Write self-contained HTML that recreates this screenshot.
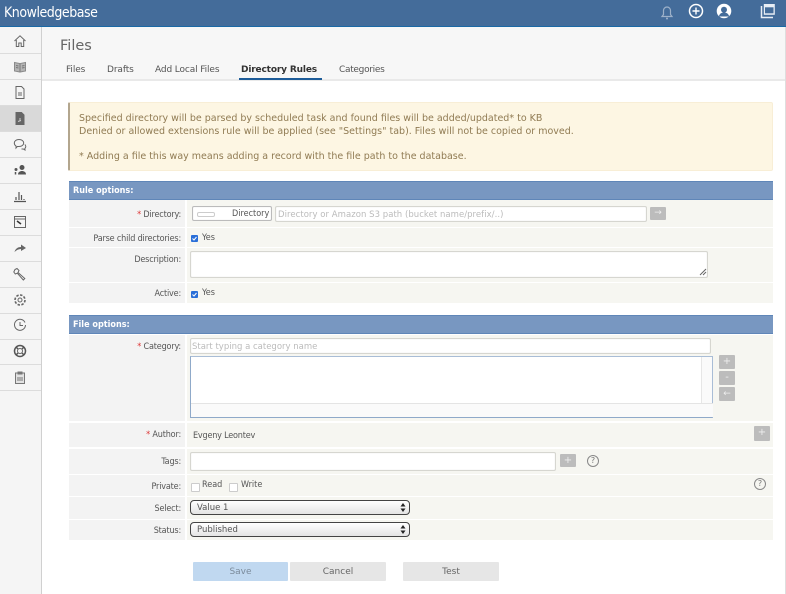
<!DOCTYPE html>
<html><head><meta charset="utf-8">
<style>
html,body{margin:0;padding:0;background:#fff;}
#p{position:relative;width:786px;height:594px;overflow:hidden;background:#fff;font-family:"DejaVu Sans","Liberation Sans",sans-serif;font-size:9px;color:#555;}
#p div,#p span.a,#p svg{position:absolute;}
.t{position:absolute;white-space:nowrap;line-height:12px;}
.c{font-stretch:condensed;}
.r{position:absolute;white-space:nowrap;line-height:12px;text-align:right;left:69px;width:112px;color:#555;font-stretch:condensed;letter-spacing:-.18px;}
.l{left:69px;width:116px;background:#f3f3f3;}
.v{left:187px;width:586px;background:#f6f6f1;}
.sep{left:0;width:41px;height:1px;background:#dcdcdc;}
.inp{background:#fff;border:1px solid #d6d6d0;border-radius:2px;box-sizing:border-box;box-shadow:inset 0 0 1px #ddd;}
.b{background:#bcbcbc;width:16px;height:15px;color:#eee;text-align:center;line-height:14px;font-size:10px;border-radius:1px;}
.h{left:69px;width:704px;height:17px;background:#7897c1;border-top:1px solid #5f86b8;border-bottom:1px solid #5f86b8;color:#fff;font-weight:bold;font-size:9px;line-height:18px;text-indent:4px;font-stretch:condensed;}
.sel{left:190px;width:220px;border:1px solid #444;border-radius:4px;box-sizing:border-box;background:linear-gradient(#fff,#e4e4e4);color:#555;line-height:14px;text-indent:6px;}
.btn{top:562px;height:19px;width:95px;text-align:center;line-height:20px;border-radius:1px;background:#e6e6e6;color:#666;}
svg{fill:none;stroke:#666;stroke-width:1;}
</style></head><body>
<div id="p">
<div style="left:0;top:0;width:786px;height:26px;background:#446c9a;border-bottom:1px solid #1a69a6;"></div>
<div class="t c" style="left:4px;top:5px;color:#fff;font-size:14px;line-height:16px;letter-spacing:-.45px;">Knowledgebase</div>

<svg style="left:660px;top:4px;" width="14" height="16" viewBox="0 0 14 16"><path d="M2 12.500h10l-1.500-2V6.500a3.500 3.500 0 0 0-7 0v4z" stroke="#9db1c9" stroke-width="1.200"/><circle cx="7" cy="14.500" r="1" fill="#9db1c9" stroke="none"/></svg>
<svg style="left:688px;top:3px;" width="16" height="16" viewBox="0 0 16 16"><circle cx="8" cy="8" r="6.500" stroke="#fff" stroke-width="1.500"/><path d="M8 4.500v7M4.500 8h7" stroke="#fff" stroke-width="1.400"/></svg>
<svg style="left:716px;top:3px;" width="16" height="16" viewBox="0 0 16 16"><circle cx="8" cy="8" r="7.300" fill="#fff" stroke="none"/><circle cx="8" cy="6.800" r="3" fill="#446c9a" stroke="none"/><path d="M2.800 13.500c.8-3 2.800-4 5.200-4s4.400 1 5.200 4" fill="#446c9a" stroke="none"/></svg>
<svg style="left:760px;top:3px;" width="16" height="16" viewBox="0 0 16 16"><path d="M1.500 3v11.500H13" stroke="#e8eef5" stroke-width="1.500"/><rect x="3.800" y="1" width="11" height="10.800" fill="#e8eef5" stroke="none"/><rect x="5" y="4.300" width="8.500" height="6" fill="#446c9a" stroke="none"/></svg>

<!-- sidebar -->
<div style="left:0;top:27px;width:41px;height:567px;background:#f5f5f5;border-right:1px solid #d0d0d0;"></div>
<div style="left:0;top:105px;width:41px;height:26px;background:#d9d9d9;"></div>
<div class="sep" style="top:53px"></div><div class="sep" style="top:79px"></div><div class="sep" style="top:105px"></div><div class="sep" style="top:131px"></div><div class="sep" style="top:157px"></div><div class="sep" style="top:183px"></div><div class="sep" style="top:209px"></div><div class="sep" style="top:235px"></div><div class="sep" style="top:261px"></div><div class="sep" style="top:287px"></div><div class="sep" style="top:313px"></div><div class="sep" style="top:339px"></div><div class="sep" style="top:364px"></div><div class="sep" style="top:390px"></div>

<svg style="left:13px;top:34px" width="14" height="14" viewBox="0 0 14 14"><path d="M1.500 7 7 1.800 12.500 7M3.300 6v6.500h2.500V9h2.400v3.500h2.500V6"/></svg>
<svg style="left:13px;top:60px" width="14" height="14" viewBox="0 0 14 14"><path d="M1.500 2.500 6.800 3.500v8.500L1.500 11zM12.500 2.500 7.200 3.500v8.500l5.300-1z" fill="#b5b5b5" stroke="#8a8a8a"/><path d="M3 5.500l2.500.5M3 7.500l2.500.5M9 6l2.500-.5M9 8l2.500-.5" stroke="#777"/></svg>
<svg style="left:13px;top:85px" width="14" height="15" viewBox="0 0 14 15"><path d="M3 1.500h5.500l2.500 2.500v9.500H3zM5 8h4M5 10h4"/></svg>
<svg style="left:13px;top:111px" width="14" height="15" viewBox="0 0 14 15"><path d="M3 1.500h5.500l2.500 2.500v9.500H3z" fill="#666" stroke="#666"/><path d="M5 10.500l3-1M7 7v3" stroke="#ccc"/></svg>
<svg style="left:13px;top:137px" width="14" height="15" viewBox="0 0 14 15"><path d="M6 2.500c2.800 0 4.700 1.500 4.700 3.500S8.800 9.500 6 9.500H4.300L3 11V9C2 8.400 1.300 7.300 1.300 6c0-2 1.900-3.500 4.700-3.500z"/><path d="M11.800 7.500c.7.500 1 1.200 1 2 0 .8-.4 1.500-1 2l.2 1.500-1.700-1H8.500"/></svg>
<svg style="left:13px;top:163px" width="14" height="14" viewBox="0 0 14 14"><circle cx="9" cy="4.500" r="2.500" fill="#555" stroke="none"/><path d="M5 11.500c0-2.500 2-3.500 4-3.500s4 1 4 3.500z" fill="#555" stroke="none"/><circle cx="3" cy="6.500" r="1.500" fill="#555" stroke="none"/><path d="M2.500 9v2.500" stroke="#555" stroke-width="1.500"/></svg>
<svg style="left:13px;top:189px" width="14" height="14" viewBox="0 0 14 14"><path d="M1 12.500h12M3 11V8M6 11V3M8.500 11V6M11 11v-1" stroke="#555" stroke-width="1.200"/></svg>
<svg style="left:13px;top:215px" width="14" height="14" viewBox="0 0 14 14"><rect x="1.500" y="1.500" width="11" height="11"/><path d="M1.500 4h11"/><path d="M4 6l4 3" stroke="#333" stroke-width="1.500"/></svg>
<svg style="left:13px;top:241px" width="14" height="14" viewBox="0 0 14 14"><path d="M1.500 11C2.500 7.500 5 6 8 6V3.500L13 7 8 10V8c-2.500 0-4.500 1-6.500 3z" fill="#666" stroke="none"/></svg>
<svg style="left:13px;top:267px" width="14" height="14" viewBox="0 0 14 14"><path d="M2 2.500l2-1 2 2-1 2 6.800 6-1.500 1.500-6-6.800-2 .8-1.500-2z"/></svg>
<svg style="left:13px;top:293px" width="14" height="14" viewBox="0 0 14 14"><circle cx="7" cy="7" r="2"/><circle cx="7" cy="7" r="5" stroke-dasharray="2.500 1.400" stroke-width="1.600"/></svg>
<svg style="left:13px;top:318px" width="14" height="14" viewBox="0 0 14 14"><path d="M12 4.500A5.500 5.500 0 1 0 12.500 7M7 4v3.500h3" /></svg>
<svg style="left:13px;top:344px" width="14" height="14" viewBox="0 0 14 14"><circle cx="7" cy="7" r="5.500" stroke="#555" stroke-width="1.500"/><circle cx="7" cy="7" r="2.500"/><path d="M3 3l2 2M11 3L9 5M3 11l2-2M11 11L9 9" stroke="#555" stroke-width="1.500"/></svg>
<svg style="left:13px;top:370px" width="14" height="15" viewBox="0 0 14 15"><rect x="2.500" y="3" width="9" height="10.500" fill="#e2e2e2" stroke="#777"/><path d="M5 2h4v2H5zM5 7v4M7 7v4M9 7v4" stroke="#777"/></svg>

<!-- page head -->
<div style="left:42px;top:27px;width:743px;height:52px;background:#f7f7f7;border-bottom:2px solid #e9e9e9;"></div>
<div style="left:785px;top:27px;width:1px;height:567px;background:#dedede;"></div>
<div class="t" style="left:60px;top:37px;font-size:14.500px;line-height:18px;color:#666;">Files</div>
<div class="t" style="left:66px;top:64px;letter-spacing:-.1px;">Files</div>
<div class="t" style="left:107px;top:64px;letter-spacing:-.1px;">Drafts</div>
<div class="t" style="left:155px;top:64px;letter-spacing:-.12px;">Add Local Files</div>
<div class="t" style="left:241px;top:64px;font-weight:bold;color:#333;letter-spacing:-.15px;">Directory Rules</div>
<div style="left:239px;top:78px;width:83px;height:2px;background:#1d5c99;"></div>
<div class="t" style="left:339px;top:64px;letter-spacing:-.3px;">Categories</div>

<!-- notice -->
<div style="left:68px;top:102px;background:#fdf6e3;border:1px solid #f8eed6;border-left:2px solid #b3a68e;border-radius:2px;width:702px;height:67px;"></div>
<div class="t" style="left:79px;top:112px;color:#907b53;font-size:9.500px;line-height:13px;">Specified directory will be parsed by scheduled task and found files will be added/updated* to KB</div>
<div class="t" style="left:79px;top:125px;color:#907b53;font-size:9.500px;line-height:13px;">Denied or allowed extensions rule will be applied (see "Settings" tab). Files will not be copied or moved.</div>
<div class="t" style="left:79px;top:150px;color:#907b53;font-size:9.500px;line-height:13px;">* Adding a file this way means adding a record with the file path to the database.</div>

<!-- rule options -->
<div class="h" style="top:181px;">Rule options:</div>
<div class="l" style="top:200px;height:27px"></div><div class="v" style="top:200px;height:27px"></div>
<div class="l" style="top:228px;height:19px"></div><div class="v" style="top:228px;height:19px"></div>
<div class="l" style="top:248px;height:34px"></div><div class="v" style="top:248px;height:34px"></div>
<div class="l" style="top:283px;height:20px"></div><div class="v" style="top:283px;height:20px"></div>

<div class="r" style="top:209px"><span style="color:#d33">*</span> Directory:</div>
<div class="inp" style="left:192px;top:206px;width:80px;height:15px;border:1px solid #bbb;"></div>
<div style="left:197px;top:212px;width:16px;height:3px;border:1px solid #ccc;border-radius:2px;"></div>
<div class="t c" style="left:232px;top:208px;color:#555;">Directory</div>
<div class="inp" style="left:275px;top:206px;width:372px;height:16px;"></div>
<div class="t" style="left:278px;top:209px;color:#bbb;font-size:8.500px;letter-spacing:.04px;">Directory or Amazon S3 path (bucket name/prefix/..)</div>
<div class="b" style="left:650px;top:207px;height:13px;line-height:12px;font-size:9px;">→</div>

<div class="r" style="top:233px">Parse child directories:</div>
<div style="left:191px;top:235px;width:7px;height:7px;background:#2a6fd8;border-radius:1px;border:0;"></div>
<svg style="left:191px;top:235px" width="7" height="7" viewBox="0 0 7 7"><path d="M1.500 3.500l1.500 1.500 2.500-3" stroke="#fff"/></svg>
<div class="t c" style="left:202px;top:232px;">Yes</div>

<div class="r" style="top:254px">Description:</div>
<div class="inp" style="left:190px;top:251px;width:518px;height:27px;"></div>
<svg style="left:699px;top:268px" width="8" height="8" viewBox="0 0 8 8"><path d="M1 7l6-6M4 7l3-3" stroke="#666"/></svg>

<div class="r" style="top:288px">Active:</div>
<div style="left:191px;top:291px;width:7px;height:7px;background:#2a6fd8;border-radius:1px;"></div>
<svg style="left:191px;top:291px" width="7" height="7" viewBox="0 0 7 7"><path d="M1.500 3.500l1.500 1.500 2.500-3" stroke="#fff"/></svg>
<div class="t c" style="left:202px;top:287px;">Yes</div>

<!-- file options -->
<div class="h" style="top:315px;">File options:</div>
<div class="l" style="top:335px;height:86px"></div><div class="v" style="top:335px;height:86px"></div>
<div class="l" style="top:423px;height:24px"></div><div class="v" style="top:423px;height:24px"></div>
<div class="l" style="top:449px;height:25px"></div><div class="v" style="top:449px;height:25px"></div>
<div class="l" style="top:475px;height:21px"></div><div class="v" style="top:475px;height:21px"></div>
<div class="l" style="top:497px;height:22px"></div><div class="v" style="top:497px;height:22px"></div>
<div class="l" style="top:520px;height:20px"></div><div class="v" style="top:520px;height:20px"></div>

<div class="r" style="top:341px"><span style="color:#d33">*</span> Category:</div>
<div class="inp" style="left:190px;top:338px;width:521px;height:16px;"></div>
<div class="t" style="left:192px;top:341px;color:#bbb;font-size:8.500px;">Start typing a category name</div>
<div style="left:190px;top:356px;width:523px;height:62px;background:#fff;border-left:1px solid #8fa9c9;border-top:1px solid #a9bdd6;border-bottom:1px solid #8fa9c9;border-right:1px solid #a9bdd6;box-sizing:border-box;"></div>
<div style="left:701px;top:357px;width:10px;height:46px;background:#fafafa;border-left:1px solid #e6e6e6;"></div>
<div style="left:191px;top:403px;width:522px;height:14px;background:#fafafa;border-top:1px solid #e4e4e4;box-sizing:border-box;"></div>
<div style="left:713px;top:403px;width:1px;height:15px;background:#f6f6f1;"></div>
<div class="b" style="left:719px;top:355px;height:14px;">+</div>
<div class="b" style="left:719px;top:371px;height:14px;">-</div>
<div class="b" style="left:719px;top:387px;height:14px;font-size:9px;">←</div>

<div class="r" style="top:429px"><span style="color:#d33">*</span> Author:</div>
<div class="t c" style="left:193px;top:430px;color:#555;letter-spacing:-.2px;">Evgeny Leontev</div>
<div class="b" style="left:754px;top:426px;">+</div>

<div class="r" style="top:456px">Tags:</div>
<div class="inp" style="left:190px;top:452px;width:366px;height:19px;"></div>
<div class="b" style="left:560px;top:454px;height:13px;line-height:13px;">+</div>
<svg style="left:586px;top:454px" width="14" height="14" viewBox="0 0 14 14"><circle cx="7" cy="7" r="5.500" stroke="#888"/></svg>
<div class="t" style="left:590px;top:455px;font-size:8px;color:#777;width:6px;text-align:center;">?</div>

<div class="r" style="top:481px">Private:</div>
<div style="left:191px;top:483px;width:7px;height:7px;border:1px solid #ccc;background:#fff;border-radius:1px;"></div>
<div class="t c" style="left:202px;top:479px;">Read</div>
<div style="left:229px;top:483px;width:7px;height:7px;border:1px solid #ccc;background:#fff;border-radius:1px;"></div>
<div class="t c" style="left:241px;top:479px;">Write</div>
<svg style="left:753px;top:477px" width="14" height="14" viewBox="0 0 14 14"><circle cx="7" cy="7" r="5.500" stroke="#888"/></svg>
<div class="t" style="left:757px;top:478px;font-size:8px;color:#777;width:6px;text-align:center;">?</div>

<div class="r" style="top:503px">Select:</div>
<div class="sel" style="top:500px;height:15px;font-size:8.500px;">Value 1</div>
<svg style="left:400px;top:503px" width="6" height="9" viewBox="0 0 6 9"><path d="M3 0 5.500 3.500H.5zM3 9 .5 5.500h5z" fill="#222" stroke="none"/></svg>

<div class="r" style="top:525px">Status:</div>
<div class="sel" style="top:522px;height:15px;font-size:8.500px;">Published</div>
<svg style="left:400px;top:525px" width="6" height="9" viewBox="0 0 6 9"><path d="M3 0 5.500 3.500H.5zM3 9 .5 5.500h5z" fill="#222" stroke="none"/></svg>

<div class="btn" style="left:193px;background:#c0d8f0;color:#7b8b9b;">Save</div>
<div class="btn" style="left:290px;width:96px;">Cancel</div>
<div class="btn" style="left:403px;width:96px;">Test</div>
</div>
</body></html>
